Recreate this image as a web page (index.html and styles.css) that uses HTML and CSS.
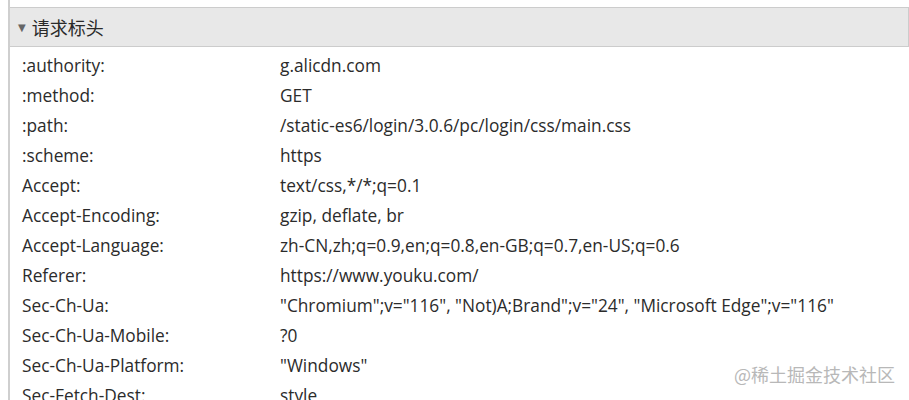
FILE: index.html
```html
<!DOCTYPE html>
<html lang="zh">
<head>
<meta charset="utf-8">
<link rel="stylesheet" href="styles.css">
</head>
<body>
<div class="panel">
  <div class="section-head"><span class="tri">▼</span>请求标头</div>
  <div class="rows">
    <div class="row"><span class="k">:authority:</span><span class="v">g.alicdn.com</span></div>
    <div class="row"><span class="k">:method:</span><span class="v">GET</span></div>
    <div class="row"><span class="k">:path:</span><span class="v">/static-es6/login/3.0.6/pc/login/css/main.css</span></div>
    <div class="row"><span class="k">:scheme:</span><span class="v">https</span></div>
    <div class="row"><span class="k">Accept:</span><span class="v">text/css,*/*;q=0.1</span></div>
    <div class="row"><span class="k">Accept-Encoding:</span><span class="v">gzip, deflate, br</span></div>
    <div class="row"><span class="k">Accept-Language:</span><span class="v">zh-CN,zh;q=0.9,en;q=0.8,en-GB;q=0.7,en-US;q=0.6</span></div>
    <div class="row"><span class="k">Referer:</span><span class="v">https://www.youku.com/</span></div>
    <div class="row"><span class="k">Sec-Ch-Ua:</span><span class="v">"Chromium";v="116", "Not)A;Brand";v="24", "Microsoft Edge";v="116"</span></div>
    <div class="row"><span class="k">Sec-Ch-Ua-Mobile:</span><span class="v">?0</span></div>
    <div class="row"><span class="k">Sec-Ch-Ua-Platform:</span><span class="v">"Windows"</span></div>
    <div class="row"><span class="k">Sec-Fetch-Dest:</span><span class="v">style</span></div>
  </div>
  <div class="watermark">@稀土掘金技术社区</div>
</div>
</body>
</html>
```
FILE: styles.css
```css
html, body {
  margin: 0;
  padding: 0;
  background: #fff;
  overflow: hidden;
}
body {
  width: 909px;
  height: 400px;
  font-family: "Open Sans", "Noto Sans CJK SC", sans-serif;
  color: #2b2b2b;
}
.panel {
  position: relative;
  margin-left: 8px;
  height: 400px;
  border-left: 2px solid #cfcfcf;
  padding-top: 7px;
  box-sizing: border-box;
}
.section-head {
  height: 38px;
  background: #e8e8e8;
  border-top: 1px solid #cccccc;
  border-bottom: 1px solid #cccccc;
  border-right: 1px solid #cccccc;
  display: flex;
  align-items: center;
  padding-left: 8px;
  font-family: "Noto Sans CJK SC", sans-serif;
  font-size: 18px;
  color: #2a2a2a;
}
.tri {
  font-size: 10px;
  color: #666;
  margin-right: 6px;
  font-family: "DejaVu Sans", sans-serif;
}
.rows {
  padding-top: 3px;
}
.row {
  display: flex;
  height: 30px;
  align-items: center;
  font-size: 17.3px;
}
.k {
  width: 258px;
  padding-left: 12px;
  flex: none;
}
.v {
  white-space: nowrap;
}
.watermark {
  position: absolute;
  right: 14px;
  bottom: 13px;
  font-family: "Noto Sans CJK SC", sans-serif;
  font-size: 18px;
  color: #b8b8b8;
}
```
